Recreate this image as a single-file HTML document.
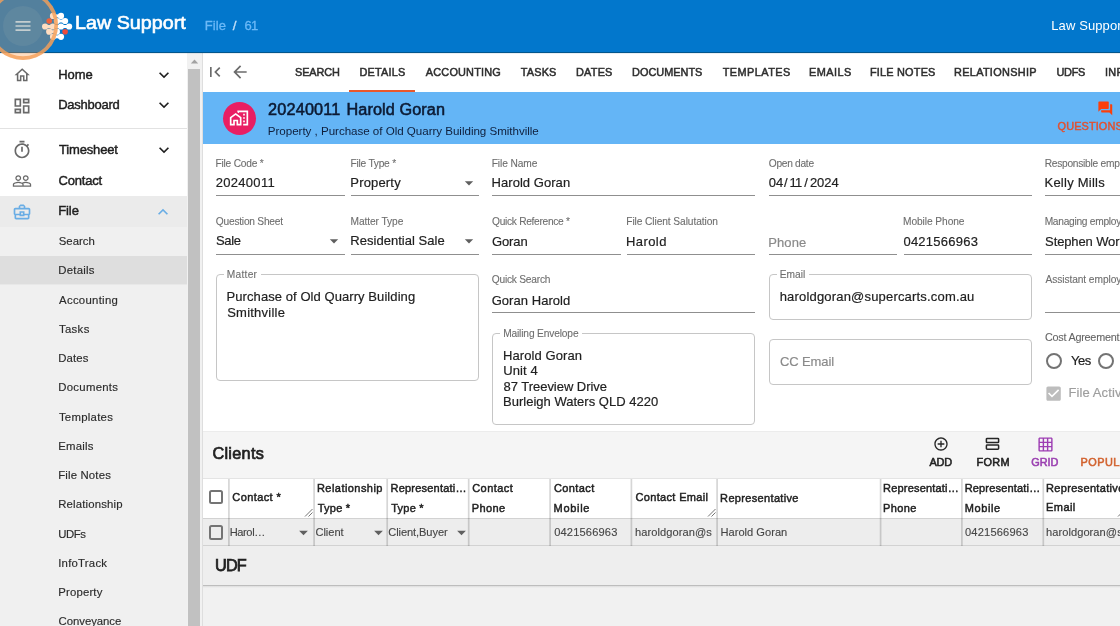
<!DOCTYPE html>
<html><head><meta charset="utf-8"><title>Law Support - File 61</title>
<style>
html,body{margin:0;padding:0;}
body{width:1120px;height:626px;overflow:hidden;position:relative;background:#f5f5f5;font-family:"Liberation Sans", sans-serif;}
#root{position:absolute;left:0;top:0;width:1120px;height:626px;overflow:hidden;will-change:transform;}
.t{position:absolute;white-space:nowrap;font-family:"Liberation Sans", sans-serif;margin:0;padding:0;}
</style></head><body><div id="root">
<div style="position:absolute;left:203px;top:52px;width:917px;height:40px;background:#fff;"></div>
<div style="position:absolute;left:203px;top:92px;width:917px;height:52px;background:#64b5f6;"></div>
<div style="position:absolute;left:203px;top:144px;width:917px;height:287px;background:#fff;"></div>
<div style="position:absolute;left:203px;top:431px;width:917px;height:47px;background:#f5f5f5;border-top:1px solid #ececec;box-sizing:border-box;"></div>
<div style="position:absolute;left:203px;top:478px;width:917px;height:40px;background:#fff;border-top:1px solid #e4e4e4;box-sizing:border-box;"></div>
<div style="position:absolute;left:203px;top:518px;width:917px;height:28px;background:#ededed;border-top:1px solid #d2d2d2;border-bottom:1px solid #d2d2d2;box-sizing:border-box;"></div>
<div style="position:absolute;left:203px;top:546px;width:917px;height:39px;background:#eeeeee;"></div>
<div style="position:absolute;left:203px;top:585px;width:917px;height:41px;background:#f1f1f1;"></div>
<div style="position:absolute;left:203px;top:585px;width:917px;height:1px;background:#bdbdbd;"></div>
<div style="position:absolute;left:203px;top:586px;width:917px;height:2px;background:linear-gradient(#dcdcdc,#f1f1f1);"></div>
<div style="position:absolute;left:202px;top:52px;width:1px;height:574px;background:#dedede;"></div>
<div style="position:absolute;left:0px;top:52px;width:187px;height:574px;background:#fff;"></div>
<div style="position:absolute;left:0px;top:128px;width:187px;height:1px;background:#e2e2e2;"></div>
<div style="position:absolute;left:0px;top:196px;width:187px;height:31px;background:#ebebeb;"></div>
<div style="position:absolute;left:0px;top:227px;width:187px;height:399px;background:#f0f0f0;"></div>
<div style="position:absolute;left:0px;top:256px;width:187px;height:28px;background:#dedede;"></div>
<div style="position:absolute;left:0px;top:284px;width:187px;height:1px;background:#e8e8e8;"></div>
<div style="position:absolute;left:187px;top:52px;width:15px;height:574px;background:#f1f1f1;"></div>
<div style="position:absolute;left:188px;top:69px;width:12px;height:557px;background:#c1c1c1;"></div>
<svg style="position:absolute;left:190px;top:58px" width="9" height="7" viewBox="0 0 9 7"><path d="M0.8 5.6 L4.5 1.6 L8.2 5.6z" fill="#a3a3a3"/></svg>
<svg style="position:absolute;left:13.2px;top:65.8px;" width="18.4" height="18.4" viewBox="0 0 24 24"><path fill="#696969" d="M12 5.69l5 4.5V18h-2v-6H9v6H7v-7.81l5-4.5M12 3L2 12h3v8h6v-6h2v6h6v-8h3L12 3z"/></svg>
<svg style="position:absolute;left:12.3px;top:95.6px;" width="20" height="20" viewBox="0 0 24 24"><path fill="#696969" d="M19 5v2h-4V5h4M9 5v6H5V5h4m10 8v6h-4v-6h4M9 17v2H5v-2h4M21 3h-8v6h8V3zM11 3H3v10h8V3zm10 8h-8v10h8V11zm-10 4H3v6h8v-6z"/></svg>
<svg style="position:absolute;left:12.2px;top:139.8px;" width="20" height="20" viewBox="0 0 24 24"><path fill="#696969" d="M15 1H9v2h6V1zm-4 13h2V8h-2v6zm8.03-6.61l1.42-1.42c-.43-.51-.9-.99-1.41-1.41l-1.42 1.42C16.07 4.74 14.12 4 12 4c-4.97 0-9 4.03-9 9s4.02 9 9 9 9-4.03 9-9c0-2.12-.74-4.07-1.97-5.61zM12 20c-3.87 0-7-3.13-7-7s3.13-7 7-7 7 3.13 7 7-3.13 7-7 7z"/></svg>
<svg style="position:absolute;left:11.8px;top:170.6px;" width="20" height="20" viewBox="0 0 24 24"><path fill="#696969" d="M16.5 13c-1.2 0-3.07.34-4.5 1-1.43-.67-3.3-1-4.5-1C5.33 13 1 14.08 1 16.25V19h22v-2.75c0-2.17-4.33-3.25-6.5-3.25zm-4 4.5h-10v-1.25c0-.54 2.56-1.75 5-1.75s5 1.21 5 1.75v1.25zm9 0H14v-1.25c0-.46-.2-.86-.52-1.22.88-.3 1.96-.53 3.02-.53 2.44 0 5 1.21 5 1.75v1.25zM7.5 12c1.93 0 3.5-1.57 3.5-3.5S9.43 5 7.5 5 4 6.57 4 8.5 5.57 12 7.5 12zm0-5.5c1.1 0 2 .9 2 2s-.9 2-2 2-2-.9-2-2 .9-2 2-2zm9 5.5c1.93 0 3.5-1.57 3.5-3.5S18.43 5 16.5 5 13 6.57 13 8.5s1.57 3.5 3.5 3.5zm0-5.5c1.1 0 2 .9 2 2s-.9 2-2 2-2-.9-2-2 .9-2 2-2z"/></svg>
<svg style="position:absolute;left:11.9px;top:202px;" width="20" height="20" viewBox="0 0 24 24"><path fill="#69ade5" d="M20 7h-4V5l-2-2h-4L8 5v2H4c-1.1 0-2 .9-2 2v5c0 .75.4 1.38 1 1.73V19c0 1.11.89 2 2 2h14c1.11 0 2-.89 2-2v-3.28c.59-.35 1-.99 1-1.72V9c0-1.1-.9-2-2-2zM10 5h4v2h-4V5zM4 9h16v5h-5v-3H9v3H4V9zm9 6h-2v-2h2v2zm6 4H5v-3h4v1h6v-1h4v3z"/></svg>
<svg style="position:absolute;left:153.6px;top:64.8px;" width="20" height="20" viewBox="0 0 24 24"><path fill="#1f1f1f" d="M16.59 8.59L12 13.17 7.41 8.59 6 10l6 6 6-6z"/></svg>
<svg style="position:absolute;left:153.6px;top:95.4px;" width="20" height="20" viewBox="0 0 24 24"><path fill="#1f1f1f" d="M16.59 8.59L12 13.17 7.41 8.59 6 10l6 6 6-6z"/></svg>
<svg style="position:absolute;left:153.6px;top:140.4px;" width="20" height="20" viewBox="0 0 24 24"><path fill="#1f1f1f" d="M16.59 8.59L12 13.17 7.41 8.59 6 10l6 6 6-6z"/></svg>
<svg style="position:absolute;left:153.4px;top:201.6px;" width="20" height="20" viewBox="0 0 24 24"><path fill="#69ade5" d="M12 8l-6 6 1.41 1.41L12 10.83l4.59 4.58L18 14z"/></svg>
<div style="position:absolute;left:0px;top:0px;width:1120px;height:53px;background:#0277cc;box-shadow:0 0 1px rgba(0,60,110,.5);border-bottom:1px solid #03568c;box-sizing:border-box;z-index:5;"></div>
<div style="position:absolute;left:2.5px;top:5.5px;width:40px;height:40px;border-radius:50%;background:rgba(255,255,255,.065);z-index:6"></div>
<svg style="position:absolute;left:0;top:0;z-index:6" width="90" height="52" viewBox="0 0 90 52"><line x1="53.0" y1="15.9" x2="61.0" y2="15.9" stroke="#fff" stroke-width="3.0"/><circle cx="53.0" cy="15.9" r="3.1" fill="#fff"/><circle cx="61.0" cy="15.9" r="3.1" fill="#fff"/><line x1="56.9" y1="21.0" x2="65.1" y2="21.0" stroke="#fff" stroke-width="3.0"/><circle cx="56.9" cy="21.0" r="3.1" fill="#fff"/><circle cx="65.1" cy="21.0" r="3.1" fill="#fff"/><circle cx="49.2" cy="21.0" r="2.8000000000000003" fill="#ea4b3c"/><line x1="45.1" y1="26.5" x2="69.1" y2="26.5" stroke="#fff" stroke-width="3.0"/><circle cx="45.1" cy="26.5" r="3.1" fill="#fff"/><circle cx="52.8" cy="26.5" r="3.1" fill="#fff"/><circle cx="61.0" cy="26.5" r="3.1" fill="#fff"/><circle cx="69.1" cy="26.5" r="3.1" fill="#fff"/><line x1="49.2" y1="31.7" x2="56.9" y2="31.7" stroke="#fff" stroke-width="3.0"/><circle cx="49.2" cy="31.7" r="3.1" fill="#fff"/><circle cx="56.9" cy="31.7" r="3.1" fill="#fff"/><circle cx="65.1" cy="31.7" r="2.8000000000000003" fill="#ea4b3c"/><line x1="53.0" y1="36.8" x2="61.0" y2="36.8" stroke="#fff" stroke-width="3.0"/><circle cx="53.0" cy="36.8" r="3.1" fill="#fff"/><circle cx="61.0" cy="36.8" r="3.1" fill="#fff"/></svg>
<svg style="position:absolute;left:205.2px;top:62px;" width="20" height="20" viewBox="0 0 24 24"><path fill="#6b6b6b" d="M18.41 16.59L13.82 12l4.59-4.59L17 6l-6 6 6 6zM6 6h2v12H6z"/></svg>
<svg style="position:absolute;left:230px;top:62.1px;" width="20" height="20" viewBox="0 0 24 24"><path fill="#6b6b6b" d="M20 11H7.83l5.59-5.59L12 4l-8 8 8 8 1.41-1.41L7.83 13H20v-2z"/></svg>
<div style="position:absolute;left:349px;top:90px;width:66px;height:2px;background:#e9572b;"></div>
<div style="position:absolute;left:222.7px;top:102px;width:33px;height:33px;background:#e91e63;border-radius:50%;"></div>
<svg style="position:absolute;left:228.9px;top:108.4px;" width="20" height="20" viewBox="0 0 24 24"><path fill="#fff" d="M1 11v10h6v-5h2v5h6V11L8 6l-7 5zm12 8h-2v-5H5v5H3v-7l5-3.5 5 3.5v7zm4-12h2v2h-2zm0 4h2v2h-2zm0 4h2v2h-2zM10 3v1.97l2 1.43V5h9v14h-4v2h6V3z"/></svg>
<svg style="position:absolute;left:1096.9px;top:100px;" width="16.6" height="16.6" viewBox="0 0 24 24"><path fill="#fb3f0a" d="M21 6h-2v9H6v2c0 .55.45 1 1 1h11l4 4V7c0-.55-.45-1-1-1zm-4 6V3c0-.55-.45-1-1-1H3c-.55 0-1 .45-1 1v14l4-4h10c.55 0 1-.45 1-1z"/></svg>
<div style="position:absolute;left:216px;top:195px;width:128.5px;height:1px;background:#8f8f8f;"></div>
<div style="position:absolute;left:351px;top:195px;width:127.75px;height:1px;background:#8f8f8f;"></div>
<svg style="position:absolute;left:458.75px;top:173.33333333333334px;" width="20" height="20" viewBox="0 0 24 24"><path fill="#5f5f5f" d="M7 10l5 5 5-5z"/></svg>
<div style="position:absolute;left:492px;top:195px;width:263px;height:1px;background:#8f8f8f;"></div>
<div style="position:absolute;left:769px;top:195px;width:263px;height:1px;background:#8f8f8f;"></div>
<div style="position:absolute;left:1045px;top:195px;width:75px;height:1px;background:#8f8f8f;"></div>
<div style="position:absolute;left:216px;top:254px;width:128.5px;height:1px;background:#8f8f8f;"></div>
<svg style="position:absolute;left:324.25px;top:230.83333333333334px;" width="20" height="20" viewBox="0 0 24 24"><path fill="#5f5f5f" d="M7 10l5 5 5-5z"/></svg>
<div style="position:absolute;left:351px;top:254px;width:127.75px;height:1px;background:#8f8f8f;"></div>
<svg style="position:absolute;left:458.75px;top:230.83333333333334px;" width="20" height="20" viewBox="0 0 24 24"><path fill="#5f5f5f" d="M7 10l5 5 5-5z"/></svg>
<div style="position:absolute;left:492px;top:254px;width:128.5px;height:1px;background:#8f8f8f;"></div>
<div style="position:absolute;left:627px;top:254px;width:128px;height:1px;background:#8f8f8f;"></div>
<div style="position:absolute;left:769px;top:254px;width:128px;height:1px;background:#8f8f8f;"></div>
<div style="position:absolute;left:904px;top:254px;width:128px;height:1px;background:#8f8f8f;"></div>
<div style="position:absolute;left:1045px;top:254px;width:75px;height:1px;background:#8f8f8f;"></div>
<div style="position:absolute;left:492px;top:312px;width:263px;height:1px;background:#8f8f8f;"></div>
<div style="position:absolute;left:1045px;top:312px;width:75px;height:1px;background:#8f8f8f;"></div>
<div style="position:absolute;left:216px;top:274px;width:263px;height:107px;border:1px solid #c6c6c6;border-radius:4px;box-sizing:border-box;"></div>
<div style="position:absolute;left:223.75px;top:273px;width:37px;height:4px;background:#fff;"></div>
<div style="position:absolute;left:492px;top:333px;width:263px;height:92px;border:1px solid #c6c6c6;border-radius:4px;box-sizing:border-box;"></div>
<div style="position:absolute;left:500px;top:332px;width:82px;height:4px;background:#fff;"></div>
<div style="position:absolute;left:769px;top:274px;width:263px;height:45.5px;border:1px solid #c6c6c6;border-radius:4px;box-sizing:border-box;"></div>
<div style="position:absolute;left:777px;top:273px;width:31.5px;height:4px;background:#fff;"></div>
<div style="position:absolute;left:769px;top:339px;width:263px;height:46px;border:1px solid #c6c6c6;border-radius:4px;box-sizing:border-box;"></div>
<div style="position:absolute;left:1045.6px;top:352.8px;width:16px;height:16px;border:2px solid #737373;border-radius:50%;box-sizing:border-box;"></div>
<div style="position:absolute;left:1098px;top:352.8px;width:16px;height:16px;border:2px solid #737373;border-radius:50%;box-sizing:border-box;"></div>
<svg style="position:absolute;left:1043.6px;top:383.5px;" width="19.2" height="19.2" viewBox="0 0 24 24"><path fill="#bdbdbd" d="M19 3H5c-1.11 0-2 .9-2 2v14c0 1.1.89 2 2 2h14c1.11 0 2-.9 2-2V5c0-1.1-.89-2-2-2zm-9 14l-5-5 1.41-1.41L10 14.17l7.59-7.59L19 8l-9 9z"/></svg>
<svg style="position:absolute;left:932.7px;top:436.2px;" width="16" height="16" viewBox="0 0 24 24"><path fill="#262626" d="M13 7h-2v4H7v2h4v4h2v-4h4v-2h-4V7zm-1-5C6.48 2 2 6.48 2 12s4.48 10 10 10 10-4.48 10-10S17.52 2 12 2zm0 18c-4.41 0-8-3.59-8-8s3.59-8 8-8 8 3.59 8 8-3.59 8-8 8z"/></svg>
<svg style="position:absolute;left:985px;top:436.7px" width="15" height="14" viewBox="0 0 15 14"><rect x="1.4" y="1.4" width="12.2" height="4.2" rx=".7" fill="none" stroke="#262626" stroke-width="1.5"/><rect x="1.4" y="8.1" width="12.2" height="4.2" rx=".7" fill="none" stroke="#262626" stroke-width="1.5"/></svg>
<svg style="position:absolute;left:1036.7px;top:436px;" width="17" height="17" viewBox="0 0 24 24"><path fill="#9d3db3" d="M20 2H4c-1.1 0-2 .9-2 2v16c0 1.1.9 2 2 2h16c1.1 0 2-.9 2-2V4c0-1.1-.9-2-2-2zM8 20H4v-4h4v4zm0-6H4v-4h4v4zm0-6H4V4h4v4zm6 12h-4v-4h4v4zm0-6h-4v-4h4v4zm0-6h-4V4h4v4zm6 12h-4v-4h4v4zm0-6h-4v-4h4v4zm0-6h-4V4h4v4z"/></svg>
<div style="position:absolute;left:228px;top:479px;width:1px;height:67px;background:rgba(0,0,0,0.152);"></div>
<div style="position:absolute;left:229px;top:479px;width:1px;height:67px;background:rgba(0,0,0,0.120);"></div>
<div style="position:absolute;left:313px;top:479px;width:1px;height:67px;background:rgba(0,0,0,0.120);"></div>
<div style="position:absolute;left:314px;top:479px;width:1px;height:67px;background:rgba(0,0,0,0.152);"></div>
<div style="position:absolute;left:386px;top:479px;width:1px;height:67px;background:rgba(0,0,0,0.104);"></div>
<div style="position:absolute;left:387px;top:479px;width:1px;height:67px;background:rgba(0,0,0,0.160);"></div>
<div style="position:absolute;left:388px;top:479px;width:1px;height:67px;background:rgba(0,0,0,0.008);"></div>
<div style="position:absolute;left:467px;top:479px;width:1px;height:67px;background:rgba(0,0,0,0.024);"></div>
<div style="position:absolute;left:468px;top:479px;width:1px;height:67px;background:rgba(0,0,0,0.160);"></div>
<div style="position:absolute;left:469px;top:479px;width:1px;height:67px;background:rgba(0,0,0,0.088);"></div>
<div style="position:absolute;left:549px;top:479px;width:1px;height:67px;background:rgba(0,0,0,0.120);"></div>
<div style="position:absolute;left:550px;top:479px;width:1px;height:67px;background:rgba(0,0,0,0.152);"></div>
<div style="position:absolute;left:630px;top:479px;width:1px;height:67px;background:rgba(0,0,0,0.072);"></div>
<div style="position:absolute;left:631px;top:479px;width:1px;height:67px;background:rgba(0,0,0,0.160);"></div>
<div style="position:absolute;left:632px;top:479px;width:1px;height:67px;background:rgba(0,0,0,0.040);"></div>
<div style="position:absolute;left:716px;top:479px;width:1px;height:67px;background:rgba(0,0,0,0.120);"></div>
<div style="position:absolute;left:717px;top:479px;width:1px;height:67px;background:rgba(0,0,0,0.152);"></div>
<div style="position:absolute;left:879px;top:479px;width:1px;height:67px;background:rgba(0,0,0,0.040);"></div>
<div style="position:absolute;left:880px;top:479px;width:1px;height:67px;background:rgba(0,0,0,0.160);"></div>
<div style="position:absolute;left:881px;top:479px;width:1px;height:67px;background:rgba(0,0,0,0.072);"></div>
<div style="position:absolute;left:961px;top:479px;width:1px;height:67px;background:rgba(0,0,0,0.152);"></div>
<div style="position:absolute;left:962px;top:479px;width:1px;height:67px;background:rgba(0,0,0,0.120);"></div>
<div style="position:absolute;left:1042px;top:479px;width:1px;height:67px;background:rgba(0,0,0,0.088);"></div>
<div style="position:absolute;left:1043px;top:479px;width:1px;height:67px;background:rgba(0,0,0,0.160);"></div>
<div style="position:absolute;left:1044px;top:479px;width:1px;height:67px;background:rgba(0,0,0,0.024);"></div>
<div style="position:absolute;left:209px;top:490px;width:14px;height:14px;border:2px solid #747474;border-radius:2.5px;box-sizing:border-box;"></div>
<div style="position:absolute;left:209px;top:525px;width:14px;height:15px;border:2px solid #747474;border-radius:2.5px;box-sizing:border-box;"></div>
<svg style="position:absolute;left:303.8px;top:508.4px" width="9" height="9" viewBox="0 0 9 9"><path d="M1 8.5 L8.5 1 M4.5 8.5 L8.5 4.5" stroke="#757575" stroke-width="1" fill="none"/></svg>
<svg style="position:absolute;left:707.3px;top:508.4px" width="9" height="9" viewBox="0 0 9 9"><path d="M1 8.5 L8.5 1 M4.5 8.5 L8.5 4.5" stroke="#757575" stroke-width="1" fill="none"/></svg>
<svg style="position:absolute;left:1116.8px;top:508.4px" width="9" height="9" viewBox="0 0 9 9"><path d="M1 8.5 L8.5 1 M4.5 8.5 L8.5 4.5" stroke="#757575" stroke-width="1" fill="none"/></svg>
<svg style="position:absolute;left:293.3px;top:522.0625px;" width="21" height="21" viewBox="0 0 24 24"><path fill="#606060" d="M7 10l5 5 5-5z"/></svg>
<svg style="position:absolute;left:368.3px;top:522.0625px;" width="21" height="21" viewBox="0 0 24 24"><path fill="#606060" d="M7 10l5 5 5-5z"/></svg>
<svg style="position:absolute;left:450.5px;top:522.0625px;" width="21" height="21" viewBox="0 0 24 24"><path fill="#606060" d="M7 10l5 5 5-5z"/></svg>
<div class="t" style="left:58.21px;top:65.00px;font-size:13px;line-height:19px;color:#1f1f1f;-webkit-text-stroke:0.45px #1f1f1f;letter-spacing:-0.062px;">Home</div>
<div class="t" style="left:58.21px;top:95.00px;font-size:13px;line-height:19px;color:#1f1f1f;-webkit-text-stroke:0.45px #1f1f1f;letter-spacing:-0.263px;">Dashboard</div>
<div class="t" style="left:59.02px;top:140.00px;font-size:13px;line-height:19px;color:#1f1f1f;-webkit-text-stroke:0.45px #1f1f1f;letter-spacing:-0.162px;">Timesheet</div>
<div class="t" style="left:58.62px;top:171.00px;font-size:13px;line-height:19px;color:#1f1f1f;-webkit-text-stroke:0.45px #1f1f1f;letter-spacing:-0.198px;">Contact</div>
<div class="t" style="left:58.21px;top:201.00px;font-size:13px;line-height:19px;color:#1f1f1f;-webkit-text-stroke:0.45px #1f1f1f;letter-spacing:-0.085px;">File</div>
<div class="t" style="left:58.72px;top:233.00px;font-size:11.375px;line-height:16px;color:#2b2b2b;-webkit-text-stroke:0.15px #2b2b2b;letter-spacing:0.021px;">Search</div>
<div class="t" style="left:58.19px;top:262.00px;font-size:11.375px;line-height:16px;color:#2b2b2b;-webkit-text-stroke:0.15px #2b2b2b;letter-spacing:0.271px;">Details</div>
<div class="t" style="left:59.08px;top:292.00px;font-size:11.375px;line-height:16px;color:#2b2b2b;-webkit-text-stroke:0.15px #2b2b2b;letter-spacing:0.279px;">Accounting</div>
<div class="t" style="left:58.90px;top:321.00px;font-size:11.375px;line-height:16px;color:#2b2b2b;-webkit-text-stroke:0.15px #2b2b2b;letter-spacing:0.352px;">Tasks</div>
<div class="t" style="left:58.19px;top:350.00px;font-size:11.375px;line-height:16px;color:#2b2b2b;-webkit-text-stroke:0.15px #2b2b2b;letter-spacing:0.170px;">Dates</div>
<div class="t" style="left:58.19px;top:379.00px;font-size:11.375px;line-height:16px;color:#2b2b2b;-webkit-text-stroke:0.15px #2b2b2b;letter-spacing:0.295px;">Documents</div>
<div class="t" style="left:58.90px;top:409.00px;font-size:11.375px;line-height:16px;color:#2b2b2b;-webkit-text-stroke:0.15px #2b2b2b;letter-spacing:0.280px;">Templates</div>
<div class="t" style="left:58.19px;top:438.00px;font-size:11.375px;line-height:16px;color:#2b2b2b;-webkit-text-stroke:0.15px #2b2b2b;letter-spacing:0.253px;">Emails</div>
<div class="t" style="left:58.19px;top:467.00px;font-size:11.375px;line-height:16px;color:#2b2b2b;-webkit-text-stroke:0.15px #2b2b2b;letter-spacing:0.166px;">File Notes</div>
<div class="t" style="left:58.19px;top:496.00px;font-size:11.375px;line-height:16px;color:#2b2b2b;-webkit-text-stroke:0.15px #2b2b2b;letter-spacing:0.173px;">Relationship</div>
<div class="t" style="left:58.36px;top:526.00px;font-size:11.375px;line-height:16px;color:#2b2b2b;-webkit-text-stroke:0.15px #2b2b2b;letter-spacing:-0.450px;">UDFs</div>
<div class="t" style="left:58.19px;top:555.00px;font-size:11.375px;line-height:16px;color:#2b2b2b;-webkit-text-stroke:0.15px #2b2b2b;letter-spacing:0.234px;">InfoTrack</div>
<div class="t" style="left:58.19px;top:584.00px;font-size:11.375px;line-height:16px;color:#2b2b2b;-webkit-text-stroke:0.15px #2b2b2b;letter-spacing:0.178px;">Property</div>
<div class="t" style="left:58.54px;top:613.00px;font-size:11.375px;line-height:16px;color:#2b2b2b;-webkit-text-stroke:0.15px #2b2b2b;letter-spacing:-0.043px;">Conveyance</div>
<div class="t" style="left:74.88px;top:10.00px;font-size:18.4px;line-height:25px;color:#fff;-webkit-text-stroke:0.6px #fff;transform:scaleX(1.0718);transform-origin:0 0;z-index:6;">Law Support</div>
<div class="t" style="left:204.73px;top:16.00px;font-size:13px;line-height:19px;color:#6cb9f7;-webkit-text-stroke:0.3px #6cb9f7;letter-spacing:0.098px;z-index:6;">File</div>
<div class="t" style="left:232.75px;top:16.00px;font-size:13.5px;line-height:19px;color:#c4e0f8;-webkit-text-stroke:0.3px #c4e0f8;letter-spacing:1.103px;z-index:6;">/</div>
<div class="t" style="left:244.48px;top:16.00px;font-size:13px;line-height:19px;color:#6cb9f7;-webkit-text-stroke:0.3px #6cb9f7;letter-spacing:-0.800px;z-index:6;">61</div>
<div class="t" style="left:1051.28px;top:16.00px;font-size:13px;line-height:19px;color:#fff;letter-spacing:0.108px;z-index:6;">Law Support</div>
<div class="t" style="left:295.01px;top:64.00px;font-size:10.9px;line-height:16px;color:#2e2e2e;-webkit-text-stroke:0.5px #2e2e2e;letter-spacing:-0.119px;">SEARCH</div>
<div class="t" style="left:359.50px;top:64.00px;font-size:10.9px;line-height:16px;color:#2e2e2e;-webkit-text-stroke:0.5px #2e2e2e;letter-spacing:0.215px;">DETAILS</div>
<div class="t" style="left:425.85px;top:64.00px;font-size:10.9px;line-height:16px;color:#2e2e2e;-webkit-text-stroke:0.5px #2e2e2e;letter-spacing:0.183px;">ACCOUNTING</div>
<div class="t" style="left:520.68px;top:64.00px;font-size:10.9px;line-height:16px;color:#2e2e2e;-webkit-text-stroke:0.5px #2e2e2e;letter-spacing:0.199px;">TASKS</div>
<div class="t" style="left:576.00px;top:64.00px;font-size:10.9px;line-height:16px;color:#2e2e2e;-webkit-text-stroke:0.5px #2e2e2e;letter-spacing:0.219px;">DATES</div>
<div class="t" style="left:632.00px;top:64.00px;font-size:10.9px;line-height:16px;color:#2e2e2e;-webkit-text-stroke:0.5px #2e2e2e;letter-spacing:0.021px;">DOCUMENTS</div>
<div class="t" style="left:722.68px;top:64.00px;font-size:10.9px;line-height:16px;color:#2e2e2e;-webkit-text-stroke:0.5px #2e2e2e;letter-spacing:0.466px;">TEMPLATES</div>
<div class="t" style="left:809.00px;top:64.00px;font-size:10.9px;line-height:16px;color:#2e2e2e;-webkit-text-stroke:0.5px #2e2e2e;letter-spacing:0.486px;">EMAILS</div>
<div class="t" style="left:870.00px;top:64.00px;font-size:10.9px;line-height:16px;color:#2e2e2e;-webkit-text-stroke:0.5px #2e2e2e;letter-spacing:0.202px;">FILE NOTES</div>
<div class="t" style="left:954.00px;top:64.00px;font-size:10.9px;line-height:16px;color:#2e2e2e;-webkit-text-stroke:0.5px #2e2e2e;letter-spacing:0.315px;">RELATIONSHIP</div>
<div class="t" style="left:1056.47px;top:64.00px;font-size:10.9px;line-height:16px;color:#2e2e2e;-webkit-text-stroke:0.5px #2e2e2e;letter-spacing:-0.244px;">UDFS</div>
<div class="t" style="left:1105.00px;top:64.00px;font-size:10.9px;line-height:16px;color:#2e2e2e;-webkit-text-stroke:0.5px #2e2e2e;letter-spacing:0.261px;">INFOTRACK</div>
<div class="t" style="left:268.01px;top:98.00px;font-size:16.25px;line-height:22px;color:#0c1a33;-webkit-text-stroke:0.55px #0c1a33;letter-spacing:0.182px;">20240011</div>
<div class="t" style="left:346.51px;top:98.00px;font-size:16.25px;line-height:22px;color:#0c1a33;-webkit-text-stroke:0.55px #0c1a33;letter-spacing:0.080px;">Harold Goran</div>
<div class="t" style="left:267.79px;top:123.00px;font-size:11.6px;line-height:16px;color:#0f1f3c;letter-spacing:-0.030px;">Property , Purchase of Old Quarry Building Smithville</div>
<div class="t" style="left:1057.61px;top:118.00px;font-size:10.9px;line-height:16px;color:#e2502f;-webkit-text-stroke:0.45px #e2502f;letter-spacing:0.115px;">QUESTIONS</div>
<div class="t" style="left:215.50px;top:156.00px;font-size:10.2px;line-height:15px;color:#6e6e6e;-webkit-text-stroke:0.1px #6e6e6e;letter-spacing:-0.212px;">File Code *</div>
<div class="t" style="left:215.73px;top:173.00px;font-size:13px;line-height:19px;color:#212121;-webkit-text-stroke:0.18px #212121;letter-spacing:0.297px;">20240011</div>
<div class="t" style="left:350.50px;top:156.00px;font-size:10.2px;line-height:15px;color:#6e6e6e;-webkit-text-stroke:0.1px #6e6e6e;letter-spacing:-0.234px;">File Type *</div>
<div class="t" style="left:350.32px;top:173.00px;font-size:13px;line-height:19px;color:#212121;-webkit-text-stroke:0.18px #212121;letter-spacing:0.172px;">Property</div>
<div class="t" style="left:491.75px;top:156.00px;font-size:10.2px;line-height:15px;color:#6e6e6e;-webkit-text-stroke:0.1px #6e6e6e;letter-spacing:-0.108px;">File Name</div>
<div class="t" style="left:491.57px;top:173.00px;font-size:13px;line-height:19px;color:#212121;-webkit-text-stroke:0.18px #212121;letter-spacing:0.048px;">Harold Goran</div>
<div class="t" style="left:768.82px;top:156.00px;font-size:10.2px;line-height:15px;color:#6e6e6e;-webkit-text-stroke:0.1px #6e6e6e;letter-spacing:-0.293px;">Open date</div>
<div class="t" style="left:768.68px;top:173.00px;font-size:13px;line-height:19px;color:#212121;-webkit-text-stroke:0.18px #212121;letter-spacing:-0.010px;">04</div>
<div class="t" style="left:783.89px;top:173.00px;font-size:13px;line-height:19px;color:#212121;-webkit-text-stroke:0.18px #212121;letter-spacing:2.264px;">/</div>
<div class="t" style="left:789.46px;top:173.00px;font-size:13px;line-height:19px;color:#212121;-webkit-text-stroke:0.18px #212121;letter-spacing:-0.800px;">11</div>
<div class="t" style="left:804.19px;top:173.00px;font-size:13px;line-height:19px;color:#212121;-webkit-text-stroke:0.18px #212121;letter-spacing:1.664px;">/</div>
<div class="t" style="left:809.88px;top:173.00px;font-size:13px;line-height:19px;color:#212121;-webkit-text-stroke:0.18px #212121;letter-spacing:0.011px;">2024</div>
<div class="t" style="left:1044.65px;top:156.00px;font-size:10.2px;line-height:15px;color:#6e6e6e;-webkit-text-stroke:0.1px #6e6e6e;letter-spacing:-0.250px;">Responsible emp</div>
<div class="t" style="left:1044.47px;top:173.00px;font-size:13px;line-height:19px;color:#212121;-webkit-text-stroke:0.18px #212121;letter-spacing:0.246px;">Kelly Mills</div>
<div class="t" style="left:215.82px;top:214.00px;font-size:10.2px;line-height:15px;color:#6e6e6e;-webkit-text-stroke:0.1px #6e6e6e;letter-spacing:-0.229px;">Question Sheet</div>
<div class="t" style="left:215.93px;top:231.00px;font-size:13px;line-height:19px;color:#212121;-webkit-text-stroke:0.18px #212121;letter-spacing:-0.339px;">Sale</div>
<div class="t" style="left:350.50px;top:214.00px;font-size:10.2px;line-height:15px;color:#6e6e6e;-webkit-text-stroke:0.1px #6e6e6e;letter-spacing:-0.074px;">Matter Type</div>
<div class="t" style="left:350.32px;top:231.00px;font-size:13px;line-height:19px;color:#212121;-webkit-text-stroke:0.18px #212121;letter-spacing:0.028px;">Residential Sale</div>
<div class="t" style="left:492.07px;top:214.00px;font-size:10.2px;line-height:15px;color:#6e6e6e;-webkit-text-stroke:0.1px #6e6e6e;letter-spacing:-0.297px;">Quick Reference *</div>
<div class="t" style="left:491.98px;top:232.00px;font-size:13px;line-height:19px;color:#212121;-webkit-text-stroke:0.18px #212121;letter-spacing:-0.118px;">Goran</div>
<div class="t" style="left:626.25px;top:214.00px;font-size:10.2px;line-height:15px;color:#6e6e6e;-webkit-text-stroke:0.1px #6e6e6e;letter-spacing:-0.085px;">File Client Salutation</div>
<div class="t" style="left:626.07px;top:232.00px;font-size:13px;line-height:19px;color:#212121;-webkit-text-stroke:0.18px #212121;letter-spacing:0.404px;">Harold</div>
<div class="t" style="left:768.32px;top:233.00px;font-size:13px;line-height:19px;color:#8a8a8a;-webkit-text-stroke:0.18px #8a8a8a;letter-spacing:0.068px;">Phone</div>
<div class="t" style="left:903.00px;top:214.00px;font-size:10.2px;line-height:15px;color:#6e6e6e;-webkit-text-stroke:0.1px #6e6e6e;letter-spacing:-0.070px;">Mobile Phone</div>
<div class="t" style="left:903.43px;top:232.00px;font-size:13px;line-height:19px;color:#212121;-webkit-text-stroke:0.18px #212121;letter-spacing:0.245px;">0421566963</div>
<div class="t" style="left:1044.65px;top:214.00px;font-size:10.2px;line-height:15px;color:#6e6e6e;-webkit-text-stroke:0.1px #6e6e6e;letter-spacing:-0.266px;">Managing employ</div>
<div class="t" style="left:1045.08px;top:232.00px;font-size:13px;line-height:19px;color:#212121;-webkit-text-stroke:0.18px #212121;letter-spacing:-0.115px;">Stephen Wor</div>
<div class="t" style="left:491.77px;top:272.00px;font-size:10.2px;line-height:15px;color:#6e6e6e;-webkit-text-stroke:0.1px #6e6e6e;letter-spacing:-0.225px;">Quick Search</div>
<div class="t" style="left:491.68px;top:291.00px;font-size:13px;line-height:19px;color:#212121;-webkit-text-stroke:0.18px #212121;letter-spacing:0.047px;">Goran Harold</div>
<div class="t" style="left:1045.45px;top:272.00px;font-size:10.2px;line-height:15px;color:#6e6e6e;-webkit-text-stroke:0.1px #6e6e6e;letter-spacing:-0.073px;">Assistant employ</div>
<div class="t" style="left:226.75px;top:267.00px;font-size:10.2px;line-height:15px;color:#6e6e6e;-webkit-text-stroke:0.1px #6e6e6e;letter-spacing:0.268px;">Matter</div>
<div class="t" style="left:226.57px;top:287.00px;font-size:13px;line-height:19px;color:#212121;-webkit-text-stroke:0.18px #212121;letter-spacing:0.071px;">Purchase of Old Quarry Building</div>
<div class="t" style="left:227.18px;top:303.00px;font-size:13px;line-height:19px;color:#212121;-webkit-text-stroke:0.18px #212121;letter-spacing:0.237px;">Smithville</div>
<div class="t" style="left:503.15px;top:326.00px;font-size:10.2px;line-height:15px;color:#6e6e6e;-webkit-text-stroke:0.1px #6e6e6e;letter-spacing:-0.145px;">Mailing Envelope</div>
<div class="t" style="left:502.97px;top:346.00px;font-size:13px;line-height:19px;color:#212121;-webkit-text-stroke:0.18px #212121;letter-spacing:0.084px;">Harold Goran</div>
<div class="t" style="left:503.18px;top:361.00px;font-size:13px;line-height:19px;color:#212121;-webkit-text-stroke:0.18px #212121;letter-spacing:0.139px;">Unit 4</div>
<div class="t" style="left:503.58px;top:377.00px;font-size:13px;line-height:19px;color:#212121;-webkit-text-stroke:0.18px #212121;letter-spacing:-0.039px;">87 Treeview Drive</div>
<div class="t" style="left:502.97px;top:392.00px;font-size:13px;line-height:19px;color:#212121;-webkit-text-stroke:0.18px #212121;letter-spacing:0.013px;">Burleigh Waters QLD 4220</div>
<div class="t" style="left:779.65px;top:267.00px;font-size:10.2px;line-height:15px;color:#6e6e6e;-webkit-text-stroke:0.1px #6e6e6e;letter-spacing:0.066px;">Email</div>
<div class="t" style="left:779.68px;top:287.00px;font-size:13px;line-height:19px;color:#212121;-webkit-text-stroke:0.18px #212121;letter-spacing:0.184px;">haroldgoran@supercarts.com.au</div>
<div class="t" style="left:779.88px;top:352.00px;font-size:13px;line-height:19px;color:#8a8a8a;-webkit-text-stroke:0.18px #8a8a8a;letter-spacing:-0.101px;">CC Email</div>
<div class="t" style="left:1044.94px;top:329.00px;font-size:10.8px;line-height:16px;color:#666666;-webkit-text-stroke:0.1px #666666;letter-spacing:-0.221px;">Cost Agreement</div>
<div class="t" style="left:1070.89px;top:351.00px;font-size:13px;line-height:19px;color:#212121;-webkit-text-stroke:0.18px #212121;letter-spacing:-0.389px;">Yes</div>
<div class="t" style="left:1068.47px;top:383.00px;font-size:13px;line-height:19px;color:#9e9e9e;-webkit-text-stroke:0.18px #9e9e9e;letter-spacing:0.100px;">File Active</div>
<div class="t" style="left:212.39px;top:442.00px;font-size:16.25px;line-height:22px;color:#212121;-webkit-text-stroke:0.7px #212121;letter-spacing:0.300px;">Clients</div>
<div class="t" style="left:929.57px;top:454.00px;font-size:10.9px;line-height:16px;color:#212121;-webkit-text-stroke:0.55px #212121;letter-spacing:-0.243px;">ADD</div>
<div class="t" style="left:976.42px;top:454.00px;font-size:10.9px;line-height:16px;color:#212121;-webkit-text-stroke:0.55px #212121;letter-spacing:0.349px;">FORM</div>
<div class="t" style="left:1031.36px;top:454.00px;font-size:10.9px;line-height:16px;color:#9a3fb0;-webkit-text-stroke:0.55px #9a3fb0;letter-spacing:-0.037px;">GRID</div>
<div class="t" style="left:1080.52px;top:454.00px;font-size:10.9px;line-height:16px;color:#d2622e;-webkit-text-stroke:0.55px #d2622e;letter-spacing:0.474px;">POPULATE</div>
<div class="t" style="left:232.31px;top:489.00px;font-size:11.0px;line-height:16px;color:#212121;-webkit-text-stroke:0.45px #212121;letter-spacing:0.409px;">Contact *</div>
<div class="t" style="left:316.97px;top:480.00px;font-size:11.0px;line-height:16px;color:#212121;-webkit-text-stroke:0.45px #212121;letter-spacing:0.447px;">Relationship</div>
<div class="t" style="left:317.65px;top:500.00px;font-size:11.0px;line-height:16px;color:#212121;-webkit-text-stroke:0.45px #212121;letter-spacing:0.259px;">Type *</div>
<div class="t" style="left:390.47px;top:480.00px;font-size:11.0px;line-height:16px;color:#212121;-webkit-text-stroke:0.45px #212121;letter-spacing:0.218px;">Representati…</div>
<div class="t" style="left:391.15px;top:500.00px;font-size:11.0px;line-height:16px;color:#212121;-webkit-text-stroke:0.45px #212121;letter-spacing:0.259px;">Type *</div>
<div class="t" style="left:472.21px;top:480.00px;font-size:11.0px;line-height:16px;color:#212121;-webkit-text-stroke:0.45px #212121;letter-spacing:0.436px;">Contact</div>
<div class="t" style="left:471.87px;top:500.00px;font-size:11.0px;line-height:16px;color:#212121;-webkit-text-stroke:0.45px #212121;letter-spacing:0.387px;">Phone</div>
<div class="t" style="left:553.96px;top:480.00px;font-size:11.0px;line-height:16px;color:#212121;-webkit-text-stroke:0.45px #212121;letter-spacing:0.395px;">Contact</div>
<div class="t" style="left:553.62px;top:500.00px;font-size:11.0px;line-height:16px;color:#212121;-webkit-text-stroke:0.45px #212121;letter-spacing:0.690px;">Mobile</div>
<div class="t" style="left:635.46px;top:489.00px;font-size:11.0px;line-height:16px;color:#212121;-webkit-text-stroke:0.45px #212121;letter-spacing:0.339px;">Contact Email</div>
<div class="t" style="left:720.12px;top:490.00px;font-size:11.0px;line-height:16px;color:#212121;-webkit-text-stroke:0.45px #212121;letter-spacing:0.336px;">Representative</div>
<div class="t" style="left:883.12px;top:480.00px;font-size:11.0px;line-height:16px;color:#212121;-webkit-text-stroke:0.45px #212121;letter-spacing:0.180px;">Representati…</div>
<div class="t" style="left:883.12px;top:500.00px;font-size:11.0px;line-height:16px;color:#212121;-webkit-text-stroke:0.45px #212121;letter-spacing:0.387px;">Phone</div>
<div class="t" style="left:964.67px;top:480.00px;font-size:11.0px;line-height:16px;color:#212121;-webkit-text-stroke:0.45px #212121;letter-spacing:0.176px;">Representati…</div>
<div class="t" style="left:964.67px;top:500.00px;font-size:11.0px;line-height:16px;color:#212121;-webkit-text-stroke:0.45px #212121;letter-spacing:0.610px;">Mobile</div>
<div class="t" style="left:1045.97px;top:480.00px;font-size:11.0px;line-height:16px;color:#212121;-webkit-text-stroke:0.45px #212121;letter-spacing:0.336px;">Representative</div>
<div class="t" style="left:1045.97px;top:499.00px;font-size:11.0px;line-height:16px;color:#212121;-webkit-text-stroke:0.45px #212121;letter-spacing:0.457px;">Email</div>
<div class="t" style="left:229.69px;top:524.00px;font-size:11.1px;line-height:16px;color:#454545;-webkit-text-stroke:0.12px #454545;letter-spacing:-0.398px;">Harol…</div>
<div class="t" style="left:315.44px;top:524.00px;font-size:11.1px;line-height:16px;color:#454545;-webkit-text-stroke:0.12px #454545;letter-spacing:-0.023px;">Client</div>
<div class="t" style="left:388.34px;top:524.00px;font-size:11.1px;line-height:16px;color:#454545;-webkit-text-stroke:0.12px #454545;letter-spacing:-0.100px;">Client,Buyer</div>
<div class="t" style="left:554.21px;top:524.00px;font-size:11.1px;line-height:16px;color:#454545;-webkit-text-stroke:0.12px #454545;letter-spacing:0.160px;">0421566963</div>
<div class="t" style="left:635.12px;top:524.00px;font-size:11.1px;line-height:16px;color:#454545;-webkit-text-stroke:0.12px #454545;letter-spacing:0.062px;width:77px;overflow:hidden;">haroldgoran@su</div>
<div class="t" style="left:720.44px;top:524.00px;font-size:11.1px;line-height:16px;color:#454545;-webkit-text-stroke:0.12px #454545;letter-spacing:0.022px;">Harold Goran</div>
<div class="t" style="left:965.01px;top:524.00px;font-size:11.1px;line-height:16px;color:#454545;-webkit-text-stroke:0.12px #454545;letter-spacing:0.183px;">0421566963</div>
<div class="t" style="left:1045.97px;top:524.00px;font-size:11.1px;line-height:16px;color:#454545;-webkit-text-stroke:0.12px #454545;letter-spacing:0.059px;">haroldgoran@su</div>
<div class="t" style="left:215.01px;top:554.00px;font-size:16.25px;line-height:22px;color:#212121;-webkit-text-stroke:0.75px #212121;letter-spacing:-0.800px;">UDF</div>
<div style="position:absolute;left:-12.2px;top:-9.7px;width:70px;height:70px;border-radius:50%;box-sizing:border-box;background:rgba(255,150,60,.32);box-shadow:inset 0 0 0 3.7px rgba(245,160,90,.8);z-index:20"></div>
<svg style="position:absolute;left:12.5px;top:16.1px;z-index:21" width="20" height="20" viewBox="0 0 24 24"><path fill="#c4cdcf" d="M3 18h18v-2H3v2zm0-5h18v-2H3v2zm0-7v2h18V6H3z"/></svg>
</div></body></html>
